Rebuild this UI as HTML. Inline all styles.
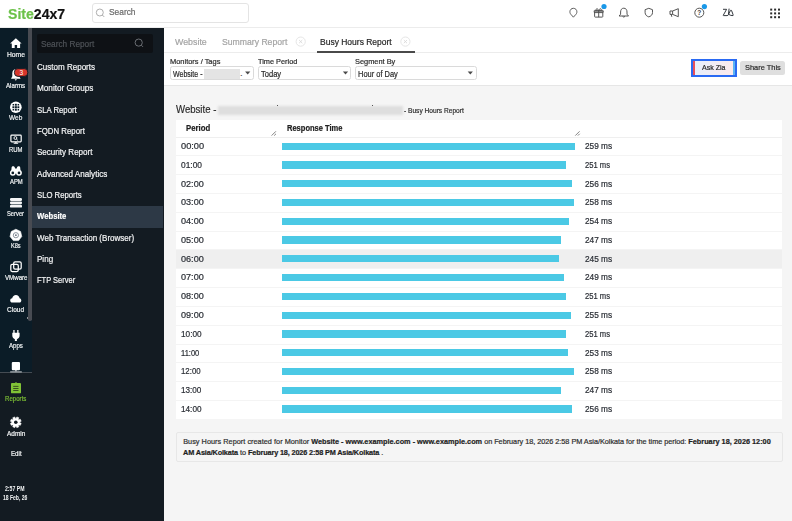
<!DOCTYPE html>
<html><head><meta charset="utf-8"><style>
*{box-sizing:border-box;margin:0;padding:0}
html,body{width:792px;height:521px;overflow:hidden;background:#f5f5f5;font-family:"Liberation Sans",sans-serif}
.t{position:absolute;white-space:nowrap;line-height:1;transform-origin:0 0;-webkit-text-stroke:0.2px currentColor}
.r{position:absolute}
svg{position:absolute;left:0;top:0;overflow:visible}
</style></head><body>
<div class="r" style="left:0px;top:0px;width:792.00px;height:28.00px;background:#fff;"></div>
<div class="r" style="left:0px;top:27px;width:792.00px;height:1.00px;background:#ececec;"></div>
<div class="r" style="left:91.5px;top:3.3px;width:157.50px;height:19.70px;background:#fff;border:1px solid #e4e4e4;border-radius:3px"></div>
<div class="r" style="left:0px;top:28px;width:32.00px;height:345.00px;background:#0b1c27;"></div>
<div class="r" style="left:0px;top:373px;width:32.00px;height:148.00px;background:#131b22;"></div>
<div class="r" style="left:32px;top:28px;width:131.50px;height:493.00px;background:#131b22;"></div>
<div class="r" style="left:28px;top:28px;width:3.80px;height:293.30px;background:#484b52;border-radius:0 0 1.8px 1.8px"></div>
<div class="r" style="left:26.9px;top:317.2px;width:1.60px;height:1.60px;background:#8d9196;"></div>
<div class="r" style="left:0px;top:372.2px;width:32.00px;height:1.00px;background:#454c53;"></div>
<div class="r" style="left:36.6px;top:33.8px;width:116.20px;height:19.20px;background:#0e1115;border-radius:2px"></div>
<div class="r" style="left:32px;top:206px;width:130.50px;height:21.70px;background:#2d3946;"></div>
<div class="r" style="left:163.5px;top:28px;width:628.50px;height:24.20px;background:#fff;"></div>
<div class="r" style="left:163.5px;top:52.2px;width:628.50px;height:1.00px;background:#ececec;"></div>
<div class="r" style="left:163.5px;top:53.2px;width:628.50px;height:31.80px;background:#fff;"></div>
<div class="r" style="left:163.5px;top:85px;width:628.50px;height:1.00px;background:#e6e6e6;"></div>
<div class="r" style="left:317px;top:50.8px;width:98.30px;height:1.90px;background:#4a4a4a;"></div>
<div class="r" style="left:170.3px;top:66.3px;width:84.10px;height:14.20px;background:#fff;border:1px solid #dadada;border-radius:2.5px"></div>
<div class="r" style="left:258.2px;top:66.3px;width:93.30px;height:14.20px;background:#fff;border:1px solid #dadada;border-radius:2.5px"></div>
<div class="r" style="left:355.2px;top:66.3px;width:122.10px;height:14.20px;background:#fff;border:1px solid #dadada;border-radius:2.5px"></div>
<div class="r" style="left:204px;top:69.2px;width:35.50px;height:9.60px;background:#e4e4e4;filter:blur(0.7px)"></div>
<div class="r" style="left:690.8px;top:58.8px;width:45.90px;height:17.80px;background:linear-gradient(90deg,#e7effc,#fde9eb);border:2px solid #2a6af3"></div>
<div class="r" style="left:692.8px;top:60.8px;width:2.00px;height:13.80px;background:#e8505b;"></div>
<div class="r" style="left:733.1px;top:60.8px;width:1.60px;height:13.80px;background:#5cb4f3;"></div>
<div class="r" style="left:740.2px;top:60.5px;width:44.70px;height:14.80px;background:#dfdfdf;border-radius:2.5px"></div>
<div class="r" style="left:217.7px;top:106px;width:185.30px;height:8.60px;background:#dedede;filter:blur(0.8px)"></div>
<div class="r" style="left:277.3px;top:104.9px;width:1.00px;height:1.00px;background:#555;"></div>
<div class="r" style="left:372.1px;top:104.9px;width:1.00px;height:1.00px;background:#555;"></div>
<div class="r" style="left:176px;top:119.6px;width:606.00px;height:299.70px;background:#fff;"></div>
<div class="r" style="left:176px;top:136.7px;width:606.00px;height:1.00px;background:#efefef;"></div>
<div class="r" style="left:176px;top:155.2px;width:606.00px;height:1.00px;background:#f4f4f4;"></div>
<div class="r" style="left:282px;top:142.5px;width:293.10px;height:7.30px;background:#4bc9e5;"></div>
<div class="r" style="left:176px;top:174.02999999999997px;width:606.00px;height:1.00px;background:#f4f4f4;"></div>
<div class="r" style="left:282px;top:161.28px;width:283.90px;height:7.30px;background:#4bc9e5;"></div>
<div class="r" style="left:176px;top:192.85999999999999px;width:606.00px;height:1.00px;background:#f4f4f4;"></div>
<div class="r" style="left:282px;top:180.06px;width:289.65px;height:7.30px;background:#4bc9e5;"></div>
<div class="r" style="left:176px;top:211.69px;width:606.00px;height:1.00px;background:#f4f4f4;"></div>
<div class="r" style="left:282px;top:198.84px;width:291.95px;height:7.30px;background:#4bc9e5;"></div>
<div class="r" style="left:176px;top:230.51999999999998px;width:606.00px;height:1.00px;background:#f4f4f4;"></div>
<div class="r" style="left:282px;top:217.62px;width:287.35px;height:7.30px;background:#4bc9e5;"></div>
<div class="r" style="left:176px;top:249.34999999999997px;width:606.00px;height:1.00px;background:#f4f4f4;"></div>
<div class="r" style="left:282px;top:236.4px;width:279.30px;height:7.30px;background:#4bc9e5;"></div>
<div class="r" style="left:176px;top:250.34999999999997px;width:606.00px;height:18.33px;background:#efefef;"></div>
<div class="r" style="left:176px;top:268.17999999999995px;width:606.00px;height:1.00px;background:#f4f4f4;"></div>
<div class="r" style="left:282px;top:255.18px;width:277.00px;height:7.30px;background:#4bc9e5;"></div>
<div class="r" style="left:176px;top:287.01px;width:606.00px;height:1.00px;background:#f4f4f4;"></div>
<div class="r" style="left:282px;top:273.96px;width:281.60px;height:7.30px;background:#4bc9e5;"></div>
<div class="r" style="left:176px;top:305.84px;width:606.00px;height:1.00px;background:#f4f4f4;"></div>
<div class="r" style="left:282px;top:292.74px;width:283.90px;height:7.30px;background:#4bc9e5;"></div>
<div class="r" style="left:176px;top:324.66999999999996px;width:606.00px;height:1.00px;background:#f4f4f4;"></div>
<div class="r" style="left:282px;top:311.52000000000004px;width:288.50px;height:7.30px;background:#4bc9e5;"></div>
<div class="r" style="left:176px;top:343.5px;width:606.00px;height:1.00px;background:#f4f4f4;"></div>
<div class="r" style="left:282px;top:330.3px;width:283.90px;height:7.30px;background:#4bc9e5;"></div>
<div class="r" style="left:176px;top:362.33px;width:606.00px;height:1.00px;background:#f4f4f4;"></div>
<div class="r" style="left:282px;top:349.08px;width:286.20px;height:7.30px;background:#4bc9e5;"></div>
<div class="r" style="left:176px;top:381.15999999999997px;width:606.00px;height:1.00px;background:#f4f4f4;"></div>
<div class="r" style="left:282px;top:367.86px;width:291.95px;height:7.30px;background:#4bc9e5;"></div>
<div class="r" style="left:176px;top:399.98999999999995px;width:606.00px;height:1.00px;background:#f4f4f4;"></div>
<div class="r" style="left:282px;top:386.64000000000004px;width:279.30px;height:7.30px;background:#4bc9e5;"></div>
<div class="r" style="left:282px;top:405.42px;width:289.65px;height:7.30px;background:#4bc9e5;"></div>
<div class="r" style="left:176px;top:432.3px;width:606.50px;height:29.50px;background:#f5f5f5;border:1px solid #e7e7e7;border-radius:2px"></div>
<div class="t" style="left:8.20px;top:5.70px;font-size:15px;color:#333;font-weight:bold;letter-spacing:0px;transform:scaleX(0.9383);"><span style="color:#6cc24a">Site</span><span style="color:#111">24x7</span></div>
<div class="t" style="left:109.00px;top:8.25px;font-size:8.8px;color:#6a6a6a;font-weight:normal;letter-spacing:0px;transform:scaleX(0.9507);">Search</div>
<div class="t" style="left:40.50px;top:39.65px;font-size:8.8px;color:#4f5358;font-weight:normal;letter-spacing:0px;transform:scaleX(0.9376);">Search Report</div>
<div class="t" style="left:36.90px;top:63.15px;font-size:8.8px;color:#f4f5f6;font-weight:normal;letter-spacing:0px;transform:scaleX(0.9134);">Custom Reports</div>
<div class="t" style="left:36.90px;top:84.45px;font-size:8.8px;color:#f4f5f6;font-weight:normal;letter-spacing:0px;transform:scaleX(0.9293);">Monitor Groups</div>
<div class="t" style="left:36.90px;top:105.75px;font-size:8.8px;color:#f4f5f6;font-weight:normal;letter-spacing:0px;transform:scaleX(0.8820);">SLA Report</div>
<div class="t" style="left:36.90px;top:127.05px;font-size:8.8px;color:#f4f5f6;font-weight:normal;letter-spacing:0px;transform:scaleX(0.8891);">FQDN Report</div>
<div class="t" style="left:36.90px;top:148.35px;font-size:8.8px;color:#f4f5f6;font-weight:normal;letter-spacing:0px;transform:scaleX(0.9153);">Security Report</div>
<div class="t" style="left:36.90px;top:169.65px;font-size:8.8px;color:#f4f5f6;font-weight:normal;letter-spacing:0px;transform:scaleX(0.9215);">Advanced Analytics</div>
<div class="t" style="left:36.90px;top:190.95px;font-size:8.8px;color:#f4f5f6;font-weight:normal;letter-spacing:0px;transform:scaleX(0.8785);">SLO Reports</div>
<div class="t" style="left:36.90px;top:212.45px;font-size:8.8px;color:#ffffff;font-weight:bold;letter-spacing:0px;transform:scaleX(0.8760);">Website</div>
<div class="t" style="left:36.90px;top:233.55px;font-size:8.8px;color:#f4f5f6;font-weight:normal;letter-spacing:0px;transform:scaleX(0.9133);">Web Transaction (Browser)</div>
<div class="t" style="left:36.90px;top:254.85px;font-size:8.8px;color:#f4f5f6;font-weight:normal;letter-spacing:0px;transform:scaleX(0.9145);">Ping</div>
<div class="t" style="left:36.90px;top:276.15px;font-size:8.8px;color:#f4f5f6;font-weight:normal;letter-spacing:0px;transform:scaleX(0.8526);">FTP Server</div>
<div class="t" style="left:6.90px;top:50.51px;font-size:7.2px;color:#f2f4f5;font-weight:normal;letter-spacing:0px;transform:scaleX(0.9387);">Home</div>
<div class="t" style="left:6.15px;top:82.01px;font-size:7.2px;color:#f2f4f5;font-weight:normal;letter-spacing:0px;transform:scaleX(0.8564);">Alarms</div>
<div class="t" style="left:9.28px;top:114.31px;font-size:7.2px;color:#f2f4f5;font-weight:normal;letter-spacing:0px;transform:scaleX(0.9044);">Web</div>
<div class="t" style="left:9.15px;top:146.11px;font-size:7.2px;color:#f2f4f5;font-weight:normal;letter-spacing:0px;transform:scaleX(0.8241);">RUM</div>
<div class="t" style="left:9.53px;top:178.11px;font-size:7.2px;color:#f2f4f5;font-weight:normal;letter-spacing:0px;transform:scaleX(0.8179);">APM</div>
<div class="t" style="left:7.15px;top:210.11px;font-size:7.2px;color:#f2f4f5;font-weight:normal;letter-spacing:0px;transform:scaleX(0.8036);">Server</div>
<div class="t" style="left:10.90px;top:242.11px;font-size:7.2px;color:#f2f4f5;font-weight:normal;letter-spacing:0px;transform:scaleX(0.7818);">K8s</div>
<div class="t" style="left:4.65px;top:274.11px;font-size:7.2px;color:#f2f4f5;font-weight:normal;letter-spacing:0px;transform:scaleX(0.8535);">VMware</div>
<div class="t" style="left:7.40px;top:305.81px;font-size:7.2px;color:#f2f4f5;font-weight:normal;letter-spacing:0px;transform:scaleX(0.9051);">Cloud</div>
<div class="t" style="left:8.78px;top:342.21px;font-size:7.2px;color:#f2f4f5;font-weight:normal;letter-spacing:0px;transform:scaleX(0.8488);">Apps</div>
<div class="t" style="left:5.03px;top:394.51px;font-size:7.2px;color:#7cbf35;font-weight:normal;letter-spacing:0px;transform:scaleX(0.8505);">Reports</div>
<div class="t" style="left:6.70px;top:429.51px;font-size:7.2px;color:#f2f4f5;font-weight:normal;letter-spacing:0px;transform:scaleX(0.9030);">Admin</div>
<div class="t" style="left:10.60px;top:449.81px;font-size:7.2px;color:#f2f4f5;font-weight:normal;letter-spacing:0px;transform:scaleX(0.8557);">Edit</div>
<div class="t" style="left:5.30px;top:486.31px;font-size:6.6px;color:#f2f4f5;font-weight:bold;letter-spacing:0px;transform:scaleX(0.7826);-webkit-text-stroke:0">2:57 PM</div>
<div class="t" style="left:2.90px;top:494.51px;font-size:6.6px;color:#f2f4f5;font-weight:bold;letter-spacing:0px;transform:scaleX(0.7635);-webkit-text-stroke:0">18 Feb, 26</div>
<div class="t" style="left:174.90px;top:37.83px;font-size:9.3px;color:#a3a3a3;font-weight:normal;letter-spacing:0px;transform:scaleX(0.9505);">Website</div>
<div class="t" style="left:221.70px;top:37.83px;font-size:9.3px;color:#a3a3a3;font-weight:normal;letter-spacing:0px;transform:scaleX(0.9296);">Summary Report</div>
<div class="t" style="left:319.90px;top:37.83px;font-size:9.3px;color:#262626;font-weight:normal;letter-spacing:0px;transform:scaleX(0.9132);">Busy Hours Report</div>
<div class="t" style="left:170.00px;top:57.70px;font-size:7.8px;color:#2a2a2a;font-weight:normal;letter-spacing:0px;transform:scaleX(0.9553);">Monitors / Tags</div>
<div class="t" style="left:258.00px;top:57.70px;font-size:7.8px;color:#2a2a2a;font-weight:normal;letter-spacing:0px;transform:scaleX(0.9419);">Time Period</div>
<div class="t" style="left:355.40px;top:57.70px;font-size:7.8px;color:#2a2a2a;font-weight:normal;letter-spacing:0px;transform:scaleX(0.9490);">Segment By</div>
<div class="t" style="left:173.20px;top:69.57px;font-size:8.3px;color:#2a2a2a;font-weight:normal;letter-spacing:0px;transform:scaleX(0.8455);">Website -</div>
<div class="t" style="left:240.30px;top:70.08px;font-size:7.7px;color:#333;font-weight:normal;letter-spacing:0px;">.</div>
<div class="t" style="left:261.00px;top:69.57px;font-size:8.3px;color:#2a2a2a;font-weight:normal;letter-spacing:0px;transform:scaleX(0.9090);">Today</div>
<div class="t" style="left:358.40px;top:69.57px;font-size:8.3px;color:#2a2a2a;font-weight:normal;letter-spacing:0px;transform:scaleX(0.8998);">Hour of Day</div>
<div class="t" style="left:702.20px;top:63.77px;font-size:7.6px;color:#262626;font-weight:normal;letter-spacing:0px;transform:scaleX(0.9274);">Ask Zia</div>
<div class="t" style="left:744.70px;top:63.77px;font-size:7.6px;color:#2a2a2a;font-weight:normal;letter-spacing:0px;transform:scaleX(0.9777);">Share This</div>
<div class="t" style="left:176.40px;top:104.02px;font-size:11.2px;color:#2a2a2a;font-weight:normal;letter-spacing:0px;transform:scaleX(0.8580);">Website -</div>
<div class="t" style="left:404.20px;top:106.77px;font-size:7.6px;color:#2a2a2a;font-weight:normal;letter-spacing:0px;transform:scaleX(0.8697);">- Busy Hours Report</div>
<div class="t" style="left:185.90px;top:123.92px;font-size:8.6px;color:#222;font-weight:bold;letter-spacing:0px;transform:scaleX(0.9021);">Period</div>
<div class="t" style="left:287.10px;top:123.92px;font-size:8.6px;color:#222;font-weight:bold;letter-spacing:0px;transform:scaleX(0.8760);">Response Time</div>
<div class="t" style="left:181.20px;top:142.02px;font-size:8.6px;color:#2a2e35;font-weight:normal;letter-spacing:0px;transform:scaleX(1.0771);">00:00</div>
<div class="t" style="left:585.30px;top:142.02px;font-size:8.6px;color:#2a2e35;font-weight:normal;letter-spacing:0px;transform:scaleX(0.9611);">259 ms</div>
<div class="t" style="left:181.20px;top:160.80px;font-size:8.6px;color:#2a2e35;font-weight:normal;letter-spacing:0px;transform:scaleX(0.9758);">01:00</div>
<div class="t" style="left:585.30px;top:160.80px;font-size:8.6px;color:#2a2e35;font-weight:normal;letter-spacing:0px;transform:scaleX(0.8858);">251 ms</div>
<div class="t" style="left:181.20px;top:179.58px;font-size:8.6px;color:#2a2e35;font-weight:normal;letter-spacing:0px;transform:scaleX(1.0586);">02:00</div>
<div class="t" style="left:585.30px;top:179.58px;font-size:8.6px;color:#2a2e35;font-weight:normal;letter-spacing:0px;transform:scaleX(0.9611);">256 ms</div>
<div class="t" style="left:181.20px;top:198.36px;font-size:8.6px;color:#2a2e35;font-weight:normal;letter-spacing:0px;transform:scaleX(1.0586);">03:00</div>
<div class="t" style="left:585.30px;top:198.36px;font-size:8.6px;color:#2a2e35;font-weight:normal;letter-spacing:0px;transform:scaleX(0.9611);">258 ms</div>
<div class="t" style="left:181.20px;top:217.14px;font-size:8.6px;color:#2a2e35;font-weight:normal;letter-spacing:0px;transform:scaleX(1.0586);">04:00</div>
<div class="t" style="left:585.30px;top:217.14px;font-size:8.6px;color:#2a2e35;font-weight:normal;letter-spacing:0px;transform:scaleX(0.9611);">254 ms</div>
<div class="t" style="left:181.20px;top:235.92px;font-size:8.6px;color:#2a2e35;font-weight:normal;letter-spacing:0px;transform:scaleX(1.0586);">05:00</div>
<div class="t" style="left:585.30px;top:235.92px;font-size:8.6px;color:#2a2e35;font-weight:normal;letter-spacing:0px;transform:scaleX(0.9611);">247 ms</div>
<div class="t" style="left:181.20px;top:254.70px;font-size:8.6px;color:#2a2e35;font-weight:normal;letter-spacing:0px;transform:scaleX(1.0586);">06:00</div>
<div class="t" style="left:585.30px;top:254.70px;font-size:8.6px;color:#2a2e35;font-weight:normal;letter-spacing:0px;transform:scaleX(0.9611);">245 ms</div>
<div class="t" style="left:181.20px;top:273.48px;font-size:8.6px;color:#2a2e35;font-weight:normal;letter-spacing:0px;transform:scaleX(1.0586);">07:00</div>
<div class="t" style="left:585.30px;top:273.48px;font-size:8.6px;color:#2a2e35;font-weight:normal;letter-spacing:0px;transform:scaleX(0.9611);">249 ms</div>
<div class="t" style="left:181.20px;top:292.26px;font-size:8.6px;color:#2a2e35;font-weight:normal;letter-spacing:0px;transform:scaleX(1.0586);">08:00</div>
<div class="t" style="left:585.30px;top:292.26px;font-size:8.6px;color:#2a2e35;font-weight:normal;letter-spacing:0px;transform:scaleX(0.8858);">251 ms</div>
<div class="t" style="left:181.20px;top:311.04px;font-size:8.6px;color:#2a2e35;font-weight:normal;letter-spacing:0px;transform:scaleX(1.0586);">09:00</div>
<div class="t" style="left:585.30px;top:311.04px;font-size:8.6px;color:#2a2e35;font-weight:normal;letter-spacing:0px;transform:scaleX(0.9611);">255 ms</div>
<div class="t" style="left:181.40px;top:329.82px;font-size:8.6px;color:#2a2e35;font-weight:normal;letter-spacing:0px;transform:scaleX(0.9574);">10:00</div>
<div class="t" style="left:585.30px;top:329.82px;font-size:8.6px;color:#2a2e35;font-weight:normal;letter-spacing:0px;transform:scaleX(0.8858);">251 ms</div>
<div class="t" style="left:181.40px;top:348.60px;font-size:8.6px;color:#2a2e35;font-weight:normal;letter-spacing:0px;transform:scaleX(0.8773);">11:00</div>
<div class="t" style="left:585.30px;top:348.60px;font-size:8.6px;color:#2a2e35;font-weight:normal;letter-spacing:0px;transform:scaleX(0.9611);">253 ms</div>
<div class="t" style="left:181.40px;top:367.38px;font-size:8.6px;color:#2a2e35;font-weight:normal;letter-spacing:0px;transform:scaleX(0.9114);">12:00</div>
<div class="t" style="left:585.30px;top:367.38px;font-size:8.6px;color:#2a2e35;font-weight:normal;letter-spacing:0px;transform:scaleX(0.9611);">258 ms</div>
<div class="t" style="left:181.40px;top:386.16px;font-size:8.6px;color:#2a2e35;font-weight:normal;letter-spacing:0px;transform:scaleX(0.9482);">13:00</div>
<div class="t" style="left:585.30px;top:386.16px;font-size:8.6px;color:#2a2e35;font-weight:normal;letter-spacing:0px;transform:scaleX(0.9611);">247 ms</div>
<div class="t" style="left:181.40px;top:404.94px;font-size:8.6px;color:#2a2e35;font-weight:normal;letter-spacing:0px;transform:scaleX(0.9528);">14:00</div>
<div class="t" style="left:585.30px;top:404.94px;font-size:8.6px;color:#2a2e35;font-weight:normal;letter-spacing:0px;transform:scaleX(0.9611);">256 ms</div>
<div class="t" style="left:183.20px;top:437.92px;font-size:7.3px;color:#2e2e2e;font-weight:normal;letter-spacing:0px;"><span style="letter-spacing:0.03px">Busy Hours Report created for Monitor</span> <b style="color:#1e1e1e;letter-spacing:0px">Website - www.example.com - www.example.com</b> <span style="letter-spacing:-0.03px">on February 18, 2026 2:58 PM Asia/Kolkata for the time period:</span> <b style="color:#1e1e1e">February 18, 2026 12:00</b></div>
<div class="t" style="left:183.10px;top:449.02px;font-size:7.3px;color:#2e2e2e;font-weight:normal;letter-spacing:0px;"><b style="color:#1e1e1e;letter-spacing:-0.14px">AM Asia/Kolkata</b> to <b style="color:#1e1e1e;letter-spacing:-0.15px">February 18, 2026 2:58 PM Asia/Kolkata</b> .</div>
<svg width="32" height="521" viewBox="0 0 32 521">
<path d="M15.85 38.3 L10.1 43.6 L11.8 43.6 L11.8 48.1 L14.7 48.1 L14.7 45.1 L17.1 45.1 L17.1 48.1 L20.1 48.1 L20.1 43.6 L21.6 43.6 Z" fill="#ffffff"/>
<path d="M15.8 69.3 C13.1 69.3 12.3 71.5 12.3 74 L12.3 76.2 L11 78.8 L20.6 78.8 L19.3 76.2 L19.3 74 C19.3 71.5 18.5 69.3 15.8 69.3 Z" fill="#ffffff"/>
<path d="M14.6 79.3 L17 79.3 L15.8 80.8 Z" fill="#ffffff"/>
<rect x="14.4" y="68.6" width="13.4" height="7.8" rx="3.6" fill="#d8362b" stroke="#0b1c27" stroke-width="0.9"/>
<text x="21.3" y="75.1" font-family="Liberation Sans" font-size="6.6" fill="#fff" text-anchor="middle">3</text>
<circle cx="15.85" cy="107.25" r="5.8" fill="#ffffff"/>
<rect x="12.60" y="104.00" width="1.50" height="1.50" fill="#0b1c27"/>
<rect x="12.40" y="106.30" width="1.90" height="1.90" fill="#0b1c27"/>
<rect x="12.60" y="109.00" width="1.50" height="1.50" fill="#0b1c27"/>
<rect x="14.90" y="103.80" width="1.90" height="1.90" fill="#0b1c27"/>
<rect x="14.80" y="106.20" width="2.10" height="2.10" fill="#0b1c27"/>
<rect x="14.90" y="108.80" width="1.90" height="1.90" fill="#0b1c27"/>
<rect x="17.60" y="104.00" width="1.50" height="1.50" fill="#0b1c27"/>
<rect x="17.40" y="106.30" width="1.90" height="1.90" fill="#0b1c27"/>
<rect x="17.60" y="109.00" width="1.50" height="1.50" fill="#0b1c27"/>
<rect x="10.9" y="135.2" width="10.3" height="6.6" rx="0.8" fill="none" stroke="#ffffff" stroke-width="1.2"/>
<rect x="15.3" y="141.8" width="1.2" height="1.3" fill="#ffffff"/>
<rect x="13.6" y="142.8" width="4.6" height="1" rx="0.5" fill="#ffffff"/>
<circle cx="15.4" cy="138" r="1.45" fill="none" stroke="#ffffff" stroke-width="0.9"/>
<path d="M16.4 139 L17.8 140.4" stroke="#ffffff" stroke-width="1"/>
<path d="M11.2 171.5 L11.6 167.6 C11.7 166.6 12.3 166.2 13.2 166.2 C14.2 166.2 14.6 166.8 14.8 167.6 L15.1 168.6 L16.7 168.6 L17 167.6 C17.2 166.8 17.6 166.2 18.6 166.2 C19.5 166.2 20.1 166.6 20.2 167.6 L20.6 171.5 Z" fill="#ffffff"/>
<circle cx="12.8" cy="172.8" r="2.9" fill="#ffffff"/><circle cx="19" cy="172.8" r="2.9" fill="#ffffff"/>
<rect x="13" y="169.5" width="5.8" height="4" fill="#ffffff"/>
<circle cx="12.8" cy="172.9" r="1.35" fill="#0b1c27"/><circle cx="19" cy="172.9" r="1.35" fill="#0b1c27"/>
<rect x="10" y="198.1" width="12" height="2.9" rx="1.2" fill="#f4f5f6"/>
<rect x="10" y="201.4" width="12" height="2.9" rx="1.2" fill="#f4f5f6"/>
<rect x="10" y="204.7" width="12" height="2.9" rx="1.2" fill="#f4f5f6"/>
<path d="M15.90 229.20 L20.59 231.46 L21.75 236.54 L18.50 240.61 L13.30 240.61 L10.05 236.54 L11.21 231.46 Z" fill="#ffffff" stroke="#ffffff" stroke-width="0.6" stroke-linejoin="round"/>
<circle cx="15.9" cy="235.2" r="2.6" fill="none" stroke="#7d8792" stroke-width="0.9"/>
<circle cx="15.9" cy="235.2" r="0.9" fill="#6a7480"/>
<rect x="13.7" y="261.8" width="7.5" height="7.4" rx="1.4" fill="none" stroke="#ffffff" stroke-width="1.25"/>
<rect x="10.8" y="264.3" width="7.5" height="7.2" rx="1.4" fill="none" stroke="#ffffff" stroke-width="1.25"/>
<path d="M12.4 302.6 C11 302.6 10.2 301.6 10.2 300.4 C10.2 299.2 11.1 298.3 12.2 298.3 C12.6 296.3 14.1 295 15.9 295 C17.9 295 19.3 296.4 19.6 298.2 C20.6 298.4 21.3 299.3 21.3 300.4 C21.3 301.6 20.5 302.6 19.3 302.6 Z" fill="#ffffff"/>
<rect x="13.3" y="330" width="1.3" height="3.2" fill="#ffffff"/><rect x="17.2" y="330" width="1.3" height="3.2" fill="#ffffff"/>
<path d="M12.3 332.7 L19.6 332.7 L19.6 335.6 C19.6 337.3 18.6 338.6 16.9 339.2 L16.9 341 L14.9 341 L14.9 339.2 C13.3 338.6 12.3 337.3 12.3 335.6 Z" fill="#ffffff"/>
<rect x="11.8" y="362" width="8.2" height="8.2" rx="1" fill="#ffffff"/>
<rect x="15.4" y="370" width="1.1" height="1.6" fill="#ffffff"/>
<rect x="10.2" y="371.3" width="11.6" height="1.2" fill="#aeb3b8"/>
<rect x="11" y="383.1" width="10" height="10.2" rx="0.9" fill="#80c236"/>
<path d="M14.4 383.4 L16 381.9 L17.6 383.4 Z" fill="#80c236"/>
<rect x="13.2" y="385.9" width="5.3" height="0.8" fill="#26331a"/>
<rect x="13.2" y="388.0" width="5.3" height="0.8" fill="#26331a"/>
<rect x="13.2" y="390.0" width="5.3" height="0.8" fill="#26331a"/>
<path d="M19.69 422.54 L21.20 423.35 L20.36 425.37 L18.73 424.88 L18.38 425.23 L18.87 426.86 L16.85 427.70 L16.04 426.19 L15.56 426.19 L14.75 427.70 L12.73 426.86 L13.22 425.23 L12.87 424.88 L11.24 425.37 L10.40 423.35 L11.91 422.54 L11.91 422.06 L10.40 421.25 L11.24 419.23 L12.87 419.72 L13.22 419.37 L12.73 417.74 L14.75 416.90 L15.56 418.41 L16.04 418.41 L16.85 416.90 L18.87 417.74 L18.38 419.37 L18.73 419.72 L20.36 419.23 L21.20 421.25 L19.69 422.06 Z" fill="#ffffff" stroke="#ffffff" stroke-width="0.5" stroke-linejoin="round"/>
<circle cx="15.8" cy="422.3" r="1.8" fill="#131b22"/>
</svg>
<svg width="792" height="28" viewBox="0 0 792 28">
<path d="M571.4 14.9 C570.4 14 569.9 13 569.9 11.8 C569.9 9.8 571.4 8.3 573.4 8.3 C575.4 8.3 576.9 9.8 576.9 11.8 C576.9 13 576.4 14 575.4 14.9 L573.4 17.2 Z" fill="none" stroke="#4d4d4d" stroke-width="0.9" stroke-linejoin="round"/>
<rect x="594.6" y="11.2" width="8.2" height="5.9" rx="0.6" fill="none" stroke="#4d4d4d" stroke-width="0.95"/>
<rect x="594.2" y="10.4" width="9" height="2.2" rx="0.5" fill="none" stroke="#4d4d4d" stroke-width="0.95"/>
<path d="M598.7 10.4 L598.7 17.1" stroke="#4d4d4d" stroke-width="0.95"/>
<path d="M598.7 10.4 C597.5 8 595.6 8.3 596.3 10.4 M598.7 10.4 C599.9 8 601.8 8.3 601.1 10.4" fill="none" stroke="#4d4d4d" stroke-width="0.9"/>
<circle cx="604" cy="6.5" r="2.6" fill="#1a98e8"/>
<path d="M623.8 8.2 C621.6 8.2 620.6 9.9 620.6 12 L620.6 14.2 L619.1 16 L628.5 16 L627 14.2 L627 12 C627 9.9 626 8.2 623.8 8.2 Z" fill="none" stroke="#4d4d4d" stroke-width="0.95" stroke-linejoin="round"/>
<path d="M622.6 16.4 Q623.8 17.8 625 16.4" fill="none" stroke="#4d4d4d" stroke-width="0.9"/>
<path d="M648.8 8.3 L652.5 9.7 L652.5 12.6 C652.5 14.8 650.8 16.3 648.8 16.9 C646.8 16.3 645.1 14.8 645.1 12.6 L645.1 9.7 Z" fill="none" stroke="#4d4d4d" stroke-width="0.95" stroke-linejoin="round"/>
<path d="M670 11 L672.6 11 L678.3 8.7 L678.3 16.7 L672.6 14.4 L670 14.4 Z" fill="none" stroke="#4d4d4d" stroke-width="0.95" stroke-linejoin="round"/>
<path d="M672.6 11 L672.6 14.4 M671.2 14.4 L671.8 16.8" stroke="#4d4d4d" stroke-width="0.95"/>
<circle cx="699.3" cy="12.7" r="4.5" fill="none" stroke="#4d4d4d" stroke-width="0.95"/>
<text x="699.3" y="15.2" font-family="Liberation Sans" font-size="6.6" font-weight="bold" fill="#444" text-anchor="middle">?</text>
<circle cx="704.4" cy="6.6" r="2.6" fill="#1a98e8"/>
<path d="M723 9.3 L726.6 9.3 L723.3 15.2 Q723.1 15.6 723.6 15.6 L727.2 15.6 Q728.2 15.6 728.4 14.6 L729.1 8.6" fill="none" stroke="#2a2f36" stroke-width="0.95" stroke-linejoin="round"/>
<path d="M728.6 14.3 Q730.9 15.8 733 15.6 Q733.4 15.4 733.1 14.7 L731.5 10.4 Q731 9.6 730.4 10.5 Z" fill="none" stroke="#2a2f36" stroke-width="0.95" stroke-linejoin="round"/>
<rect x="770.2" y="8.6" width="2" height="2" fill="#2c2c2c"/>
<rect x="770.2" y="12.4" width="2" height="2" fill="#2c2c2c"/>
<rect x="770.2" y="16.2" width="2" height="2" fill="#2c2c2c"/>
<rect x="774.1" y="8.6" width="2" height="2" fill="#2c2c2c"/>
<rect x="774.1" y="12.4" width="2" height="2" fill="#2c2c2c"/>
<rect x="774.1" y="16.2" width="2" height="2" fill="#2c2c2c"/>
<rect x="778.0" y="8.6" width="2" height="2" fill="#2c2c2c"/>
<rect x="778.0" y="12.4" width="2" height="2" fill="#2c2c2c"/>
<rect x="778.0" y="16.2" width="2" height="2" fill="#2c2c2c"/>
</svg>
<svg width="792" height="521" viewBox="0 0 792 521">
<circle cx="99.8" cy="12.5" r="3.5" fill="none" stroke="#a9a9a9" stroke-width="0.95"/>
<path d="M102.3 15 L104.2 16.9" stroke="#a9a9a9" stroke-width="1"/>
<circle cx="138.7" cy="42.6" r="3.6" fill="none" stroke="#6a6e73" stroke-width="1"/>
<path d="M141.3 45.2 L143 46.9" stroke="#6a6e73" stroke-width="1"/>
<circle cx="300.7" cy="41.6" r="4.6" fill="none" stroke="#e2e2e2" stroke-width="0.9"/>
<path d="M299.09999999999997 40 L302.3 43.2 M302.3 40 L299.09999999999997 43.2" stroke="#d6d6d6" stroke-width="0.8"/>
<circle cx="405.4" cy="41.6" r="4.6" fill="none" stroke="#e2e2e2" stroke-width="0.9"/>
<path d="M403.79999999999995 40 L407.0 43.2 M407.0 40 L403.79999999999995 43.2" stroke="#d6d6d6" stroke-width="0.8"/>
<path d="M245.1 71.6 L250.29999999999998 71.6 L247.7 74.4 Z" fill="#4a4a4a"/>
<path d="M342.9 71.6 L348.1 71.6 L345.5 74.4 Z" fill="#4a4a4a"/>
<path d="M467.7 71.6 L472.90000000000003 71.6 L470.3 74.4 Z" fill="#4a4a4a"/>
<path d="M271.6 135.6 L275.90000000000003 131.3 M274.20000000000005 135.6 L276.0 133.8" stroke="#666" stroke-width="0.8"/>
<path d="M575.3 135.6 L579.5999999999999 131.3 M577.9 135.6 L579.6999999999999 133.8" stroke="#666" stroke-width="0.8"/>
</svg>
</body></html>
